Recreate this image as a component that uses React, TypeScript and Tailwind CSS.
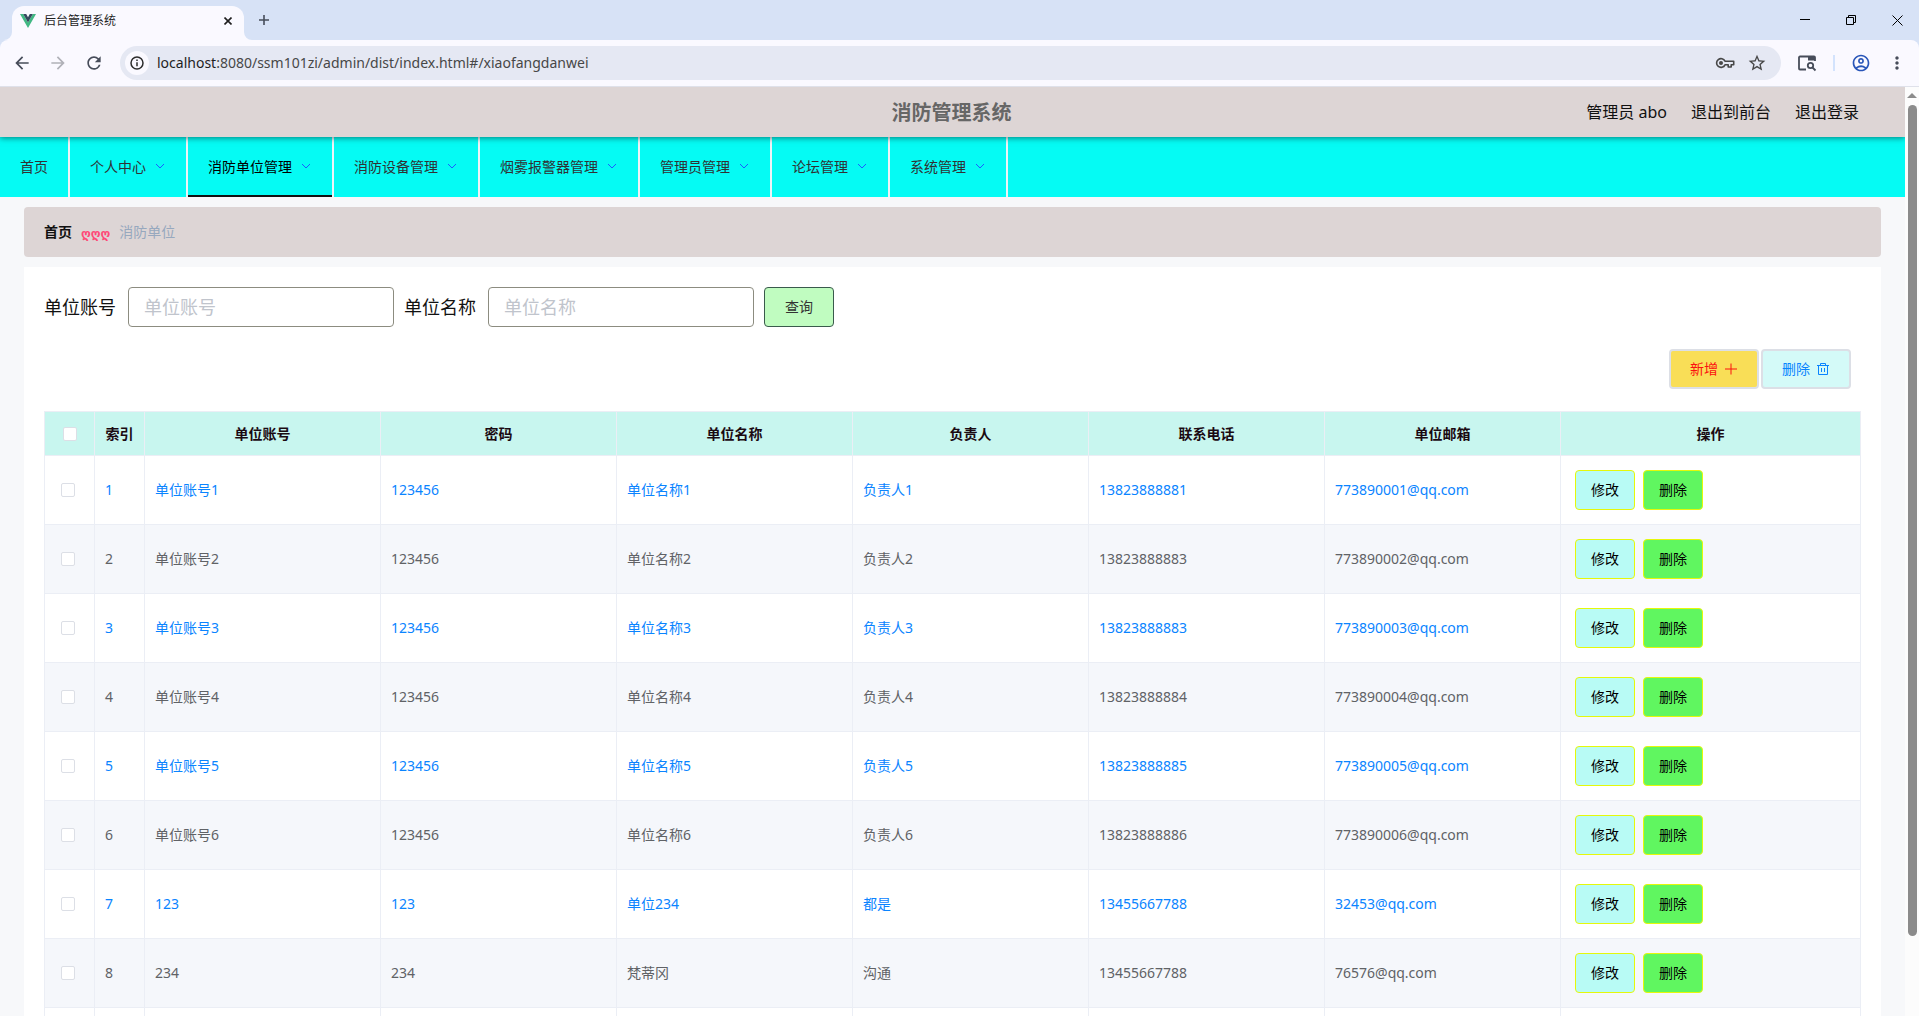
import React from 'react';
import {
  MdArrowBack,
  MdArrowForward,
  MdMoreVert,
  MdOutlineAccountCircle,
  MdRefresh,
  MdStarBorder
} from 'react-icons/md';

interface Unit {
  account: string;
  password: string;
  name: string;
  leader: string;
  phone: string;
  email: string;
}

const menus = ['个人中心', '消防单位管理', '消防设备管理', '烟雾报警器管理', '管理员管理', '论坛管理', '系统管理'];

const columns = ['单位账号', '密码', '单位名称', '负责人', '联系电话', '单位邮箱'];

const units: Unit[] = [
  { account: '单位账号1', password: '123456', name: '单位名称1', leader: '负责人1', phone: '13823888881', email: '773890001@qq.com' },
  { account: '单位账号2', password: '123456', name: '单位名称2', leader: '负责人2', phone: '13823888883', email: '773890002@qq.com' },
  { account: '单位账号3', password: '123456', name: '单位名称3', leader: '负责人3', phone: '13823888883', email: '773890003@qq.com' },
  { account: '单位账号4', password: '123456', name: '单位名称4', leader: '负责人4', phone: '13823888884', email: '773890004@qq.com' },
  { account: '单位账号5', password: '123456', name: '单位名称5', leader: '负责人5', phone: '13823888885', email: '773890005@qq.com' },
  { account: '单位账号6', password: '123456', name: '单位名称6', leader: '负责人6', phone: '13823888886', email: '773890006@qq.com' },
  { account: '123', password: '123', name: '单位234', leader: '都是', phone: '13455667788', email: '32453@qq.com' },
  { account: '234', password: '234', name: '梵蒂冈', leader: '沟通', phone: '13455667788', email: '76576@qq.com' }
];

const VueLogo = () => (
  <svg width="16" height="16" viewBox="0 0 16 16" aria-hidden="true">
    <path d="M0 1h3.2L8 9.4 12.800 1H16L8 15z" fill="#41b883" />
    <path d="M3.200 1h3L8 4.200 9.800 1h3L8 9.400z" fill="#35495e" />
  </svg>
);

const KeyIcon = () => (
  <svg width="20" height="20" viewBox="0 0 20 20" fill="none" stroke="#474747" strokeWidth="1.600" aria-hidden="true">
    <path d="M10 8.200A4.400 4.400 0 1 0 10 11.800h3.200v2.200h3v-2.200h2.500V8.200z" strokeLinejoin="round" />
    <circle cx="6" cy="10" r="2" fill="#474747" stroke="none" />
  </svg>
);

const PanelSearchIcon = () => (
  <svg width="20" height="20" viewBox="0 0 20 20" fill="none" stroke="#474d5a" strokeWidth="1.800" aria-hidden="true">
    <path d="M9 16.500H3a1 1 0 0 1-1-1V4.500a1 1 0 0 1 1-1h14a1 1 0 0 1 1 1V8" />
    <path d="M11 3h7v4.500h-7z" fill="#474d5a" stroke="none" />
    <circle cx="13.500" cy="12.500" r="2.700" />
    <path d="m15.500 14.500 3 3" />
  </svg>
);

const ArrowDown = () => (
  <svg width="12" height="12" viewBox="0 0 12 12" fill="none" stroke="#1a5cff" aria-hidden="true">
    <path d="M2 3l4 4 4-4" />
  </svg>
);

const TrashIcon = () => (
  <svg width="14" height="14" viewBox="0 0 14 14" fill="none" stroke="currentColor" aria-hidden="true">
    <path d="M1 3.500h12M2.500 3.500v9h9v-9M4.500 3.500V1.500h5v2M5.500 6v4M8.500 6v4" />
  </svg>
);

const PlusIcon = () => (
  <svg width="14" height="14" viewBox="0 0 14 14" fill="none" stroke="currentColor" aria-hidden="true">
    <path d="M7 1.500v11M1 7h12" />
  </svg>
);

const TabStrip = () => (
  <div className="flex h-10 items-start">
    <div className="relative ml-3 mt-1.5 flex h-[34px] w-[232px] items-center rounded-t-xl bg-[#faf9ff] px-2 pb-1 text-xs text-[#1f1f1f]">
      <svg className="absolute bottom-0 -left-2" width="8" height="8" viewBox="0 0 8 8" aria-hidden="true">
        <path d="M8 0v8H0a8 8 0 0 0 8-8z" fill="#faf9ff" />
      </svg>
      <svg className="absolute bottom-0 -right-2" width="8" height="8" viewBox="0 0 8 8" aria-hidden="true">
        <path d="M0 0v8h8a8 8 0 0 1-8-8z" fill="#faf9ff" />
      </svg>
      <VueLogo />
      <span className="ml-2 flex-1">后台管理系统</span>
      <button type="button" aria-label="关闭标签页" className="flex size-4 items-center justify-center">
        <svg width="8" height="8" viewBox="0 0 8 8" stroke="#1f1f1f" strokeWidth="1.600" aria-hidden="true">
          <path d="M.5.5l7 7M7.500.5l-7 7" />
        </svg>
      </button>
    </div>
    <button type="button" aria-label="新标签页" className="mt-3 ml-3 flex size-4 items-center justify-center">
      <svg width="12" height="12" viewBox="0 0 12 12" stroke="#474d5a" strokeWidth="1.600" aria-hidden="true">
        <path d="M6 1v10M1 6h10" />
      </svg>
    </button>
    <div className="ml-auto flex h-10 items-center gap-9 pr-4">
      <button type="button" aria-label="最小化">
        <svg width="10" height="10" viewBox="0 0 10 10" stroke="#000" aria-hidden="true">
          <path d="M0 4.500h10" />
        </svg>
      </button>
      <button type="button" aria-label="还原">
        <svg width="10" height="10" viewBox="0 0 10 10" fill="none" stroke="#000" aria-hidden="true">
          <path d="M.5 2.500h7v7h-7zM2.500 2.500v-2h7v7h-2" />
        </svg>
      </button>
      <button type="button" aria-label="关闭">
        <svg width="11" height="11" viewBox="0 0 11 11" stroke="#000" aria-hidden="true">
          <path d="M.5.500l10 10M10.500.500l-10 10" />
        </svg>
      </button>
    </div>
  </div>
);

const Toolbar = () => (
  <div className="flex h-[47px] items-center rounded-t-lg border-b border-[#dfe1ea] bg-[#faf9ff] px-3 text-[#474d5a]">
    <button type="button" aria-label="后退"><MdArrowBack size={20} /></button>
    <button type="button" aria-label="前进" className="ml-4 text-[#b0b1b8]"><MdArrowForward size={20} /></button>
    <button type="button" aria-label="刷新" className="ml-4"><MdRefresh size={20} /></button>
    <div className="ml-4 flex h-[34px] flex-1 items-center rounded-full bg-[#e5e8f3] pr-3.5 pl-[5px]">
      <span className="flex h-6 w-6 items-center justify-center rounded-full bg-[#faf9ff]">
        <svg width="16" height="16" viewBox="0 0 16 16" fill="none" stroke="#2c2c2c" strokeWidth="1.500" aria-hidden="true">
          <circle cx="8" cy="8" r="6" />
          <path d="M8 7.200v4M8 4.500V6" />
        </svg>
      </span>
      <span className="ml-2 flex-1 text-sm text-[#474747]">
        <span className="text-[#1f1f1f]">localhost</span>:8080/ssm101zi/admin/dist/index.html#/xiaofangdanwei
      </span>
      <button type="button" aria-label="密码"><KeyIcon /></button>
      <button type="button" aria-label="收藏" className="ml-3 text-[#474747]"><MdStarBorder size={20} /></button>
    </div>
    <button type="button" aria-label="侧边栏搜索" className="ml-4"><PanelSearchIcon /></button>
    <span className="mx-4 h-4 w-0.5 bg-[#d3e3fd]" />
    <button type="button" aria-label="个人资料" className="text-[#2855b8]"><MdOutlineAccountCircle size={20} /></button>
    <button type="button" aria-label="菜单" className="ml-4"><MdMoreVert size={20} /></button>
  </div>
);

const Header = () => (
  <header className="relative z-10 grid h-[50px] grid-cols-[1fr_auto_1fr] items-center bg-[#ddd5d5] pr-[46px] shadow-[0_1px_6px_rgba(0,0,0,0.5)]">
    <span />
    <h1 className="pt-0.5 pl-11 text-xl font-bold text-[#666]">消防管理系统</h1>
    <div className="flex justify-end gap-6 text-base text-[#111]">
      <span>管理员 abo</span>
      <a href="#front">退出到前台</a>
      <a href="#logout">退出登录</a>
    </div>
  </header>
);

const Nav = () => (
  <nav className="flex h-[60px] bg-[#05fbf4] text-sm text-[#303133]">
    <a href="#home" className="flex items-center border-r-2 border-[#eef3f7] px-5">首页</a>
    {menus.map((menu, i) => (
      <button
        key={menu}
        type="button"
        className={`flex items-center gap-2 px-5 ${i === 1 ? 'text-black shadow-[inset_0_-2px_#111]' : ''} border-r-2 border-[#eef3f7]`}
      >
        {menu}
        <ArrowDown />
      </button>
    ))}
  </nav>
);

const SearchField = ({ id, label }: { id: string; label: string }) => (
  <div className="flex items-center">
    <label htmlFor={id} className="pr-3 text-lg text-[#111]">{label}</label>
    <input
      id={id}
      placeholder={label}
      className="h-10 w-[266px] rounded border border-[#8c8c80] bg-white px-[15px] text-lg placeholder:text-[#c0c4cc]"
    />
  </div>
);

const Tick = ({ label }: { label: string }) => (
  <input
    type="checkbox"
    aria-label={label}
    className="block size-3.5 appearance-none rounded-xs border border-[#dcdfe6] bg-white"
  />
);

const UnitTable = () => (
  <table className="w-full table-fixed border-separate border-spacing-0 border-t border-l border-[#ebeef5] text-sm">
    <colgroup>
      <col className="w-[50px]" />
      <col className="w-[50px]" />
      {columns.map((col) => <col key={col} />)}
      <col className="w-[300px]" />
    </colgroup>
    <thead>
      <tr className="h-11 bg-[#c8f6ef] text-[#1b0a12]">
        <th className="border-r border-b border-[#ebeef5] pl-[18px]"><Tick label="全选" /></th>
        <th className="border-r border-b border-[#ebeef5] font-bold">索引</th>
        {columns.map((col) => (
          <th key={col} className="border-r border-b border-[#ebeef5] font-bold">{col}</th>
        ))}
        <th className="border-r border-b border-[#ebeef5] font-bold">操作</th>
      </tr>
    </thead>
    <tbody>
      {units.map((unit, i) => (
        <tr key={i} className={i % 2 === 0 ? 'h-[69px] bg-white text-[#0a84ff]' : 'h-[69px] bg-[#f5f7fb] text-[#606266]'}>
          <td className="border-r border-b border-[#ebeef5] pl-4"><Tick label={`选择第${i + 1}行`} /></td>
          <td className="border-r border-b border-[#ebeef5] px-2.5">{i + 1}</td>
          {[unit.account, unit.password, unit.name, unit.leader, unit.phone, unit.email].map((value, j) => (
            <td key={j} className="border-r border-b border-[#ebeef5] px-2.5">{value}</td>
          ))}
          <td className="border-r border-b border-[#ebeef5] px-3.5">
            <div className="flex gap-2 text-black">
              <button type="button" className="h-10 w-[60px] rounded border border-[#e5f80a] bg-[#b8fbf5]">修改</button>
              <button type="button" className="h-10 w-[60px] rounded border border-[#e5f80a] bg-[#60f660]">删除</button>
            </div>
          </td>
        </tr>
      ))}
      {/* next row, below the fold */}
      <tr className="h-[69px] bg-white">
        {Array.from({ length: 9 }, (_, i) => (
          <td key={i} className="border-r border-b border-[#ebeef5]" />
        ))}
      </tr>
    </tbody>
  </table>
);

const Scrollbar = () => (
  <div className="flex w-3.5 shrink-0 flex-col items-center bg-[#fcfcfc] pt-1.5">
    <svg width="10" height="5" viewBox="0 0 10 5" aria-hidden="true">
      <path d="M5 0l5 5H0z" fill="#8b8b8b" />
    </svg>
    <div className="mt-[7px] h-[90%] w-[9px] rounded-full bg-[#8b8b8b]" />
  </div>
);

const App: React.FC = () => {
  return (
    <div className="flex h-screen flex-col overflow-hidden bg-[#f7f8fa] font-['Noto_Sans','Noto_Sans_CJK_SC',sans-serif]">
      <div className="bg-[#d7e2f6]">
        <TabStrip />
        <Toolbar />
      </div>
      <div className="flex min-h-0 flex-1">
        <div className="min-w-0 flex-1 overflow-hidden">
          <Header />
          <Nav />
          <main className="px-6 pt-2.5">
            <div className="flex h-[50px] items-center gap-[9px] rounded bg-[#ddd5d5] px-5 text-sm">
              <a href="#home" className="font-bold text-[#111]">首页</a>
              <span className="pt-1 font-['DejaVu_Sans',sans-serif] text-xs font-bold text-[#ff4a78]">ღღღ</span>
              <span className="text-[#97a8be]">消防单位</span>
            </div>
            <section className="mt-2.5 bg-white p-5">
              <form className="flex gap-2.5">
                <SearchField id="account" label="单位账号" />
                <SearchField id="name" label="单位名称" />
                <button type="button" className="h-10 w-[70px] rounded border border-[#3a5a4c] bg-[#c0fcc0] text-sm text-[#333]">
                  查询
                </button>
              </form>
              <div className="mt-[22px] mb-[22px] flex justify-end gap-0.5 pr-2.5 text-sm">
                <button type="button" className="flex h-10 items-center gap-1.5 rounded border-2 border-[#dcdfe6] bg-[#f9de57] px-[19px] text-[#fb1010]">
                  新增 <PlusIcon />
                </button>
                <button type="button" className="flex h-10 items-center gap-1.5 rounded border-2 border-[#dcdfe6] bg-[#d4faf8] px-[19px] text-[#0a84ff]">
                  删除 <TrashIcon />
                </button>
              </div>
              <UnitTable />
            </section>
          </main>
        </div>
        <Scrollbar />
      </div>
    </div>
  );
};

export default App;
